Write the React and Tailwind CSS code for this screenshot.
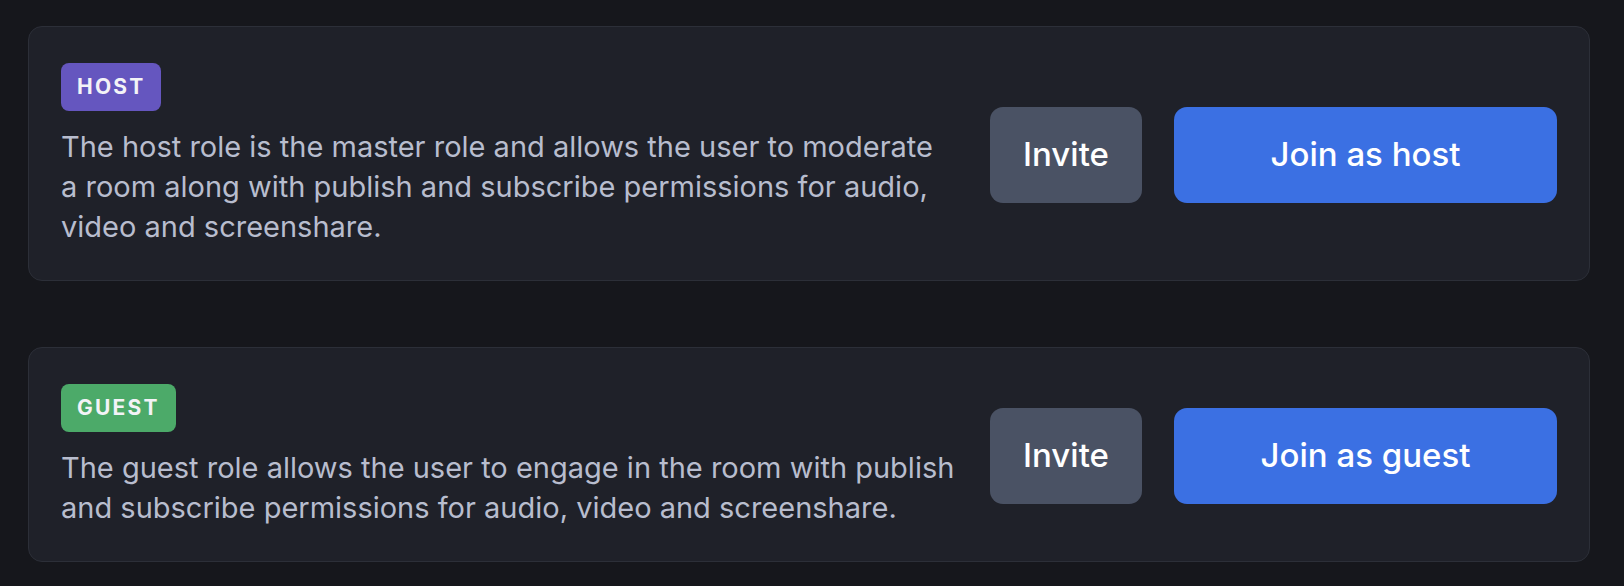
const roles = [
  {
    name: "HOST",
    badge: "bg-[#6556bf]",
    description:
      "The host role is the master role and allows the user to moderate a room along with publish and subscribe permissions for audio, video and screenshare.",
    join: "Join as host",
  },
  {
    name: "GUEST",
    badge: "bg-[#4caa69]",
    description:
      "The guest role allows the user to engage in the room with publish and subscribe permissions for audio, video and screenshare.",
    join: "Join as guest",
  },
];

function RoleCard({ role }) {
  return (
    <div className="flex items-center gap-[32px] rounded-[14px] border border-[#2c2f38] bg-[#1f2129] pl-[32px] pr-[32px] pt-[36px] pb-[33px]">
      {/* Role info */}
      <div className="flex flex-1 flex-col items-start gap-[16px]">
        <span
          className={`flex h-[48px] items-center rounded-[8px] px-[16px] text-[21px] font-bold tracking-[2.2px] text-[#f3f3f7] ${role.badge}`}
        >
          {role.name}
        </span>
        <p className="max-w-[895px] text-[29px] leading-[40px] text-[#b8bdce]">
          {role.description}
        </p>
      </div>

      {/* Actions */}
      <button className="flex h-[96px] w-[152px] items-center justify-center rounded-[13px] bg-[#4a5264] text-[33px] font-medium text-white">
        Invite
      </button>
      <button className="flex h-[96px] w-[383px] items-center justify-center rounded-[13px] bg-[#3b70e3] text-[33px] font-medium text-white">
        {role.join}
      </button>
    </div>
  );
}

export default function App() {
  return (
    <div
      className="min-h-[586px] w-full bg-[#16171c] pt-[26px] pl-[28px]"
      style={{ fontFamily: "Inter, 'Noto Sans', sans-serif" }}
    >
      <div className="flex w-[1562px] flex-col gap-[66px]">
        {roles.map((r) => (
          <RoleCard key={r.name} role={r} />
        ))}
      </div>
    </div>
  );
}
